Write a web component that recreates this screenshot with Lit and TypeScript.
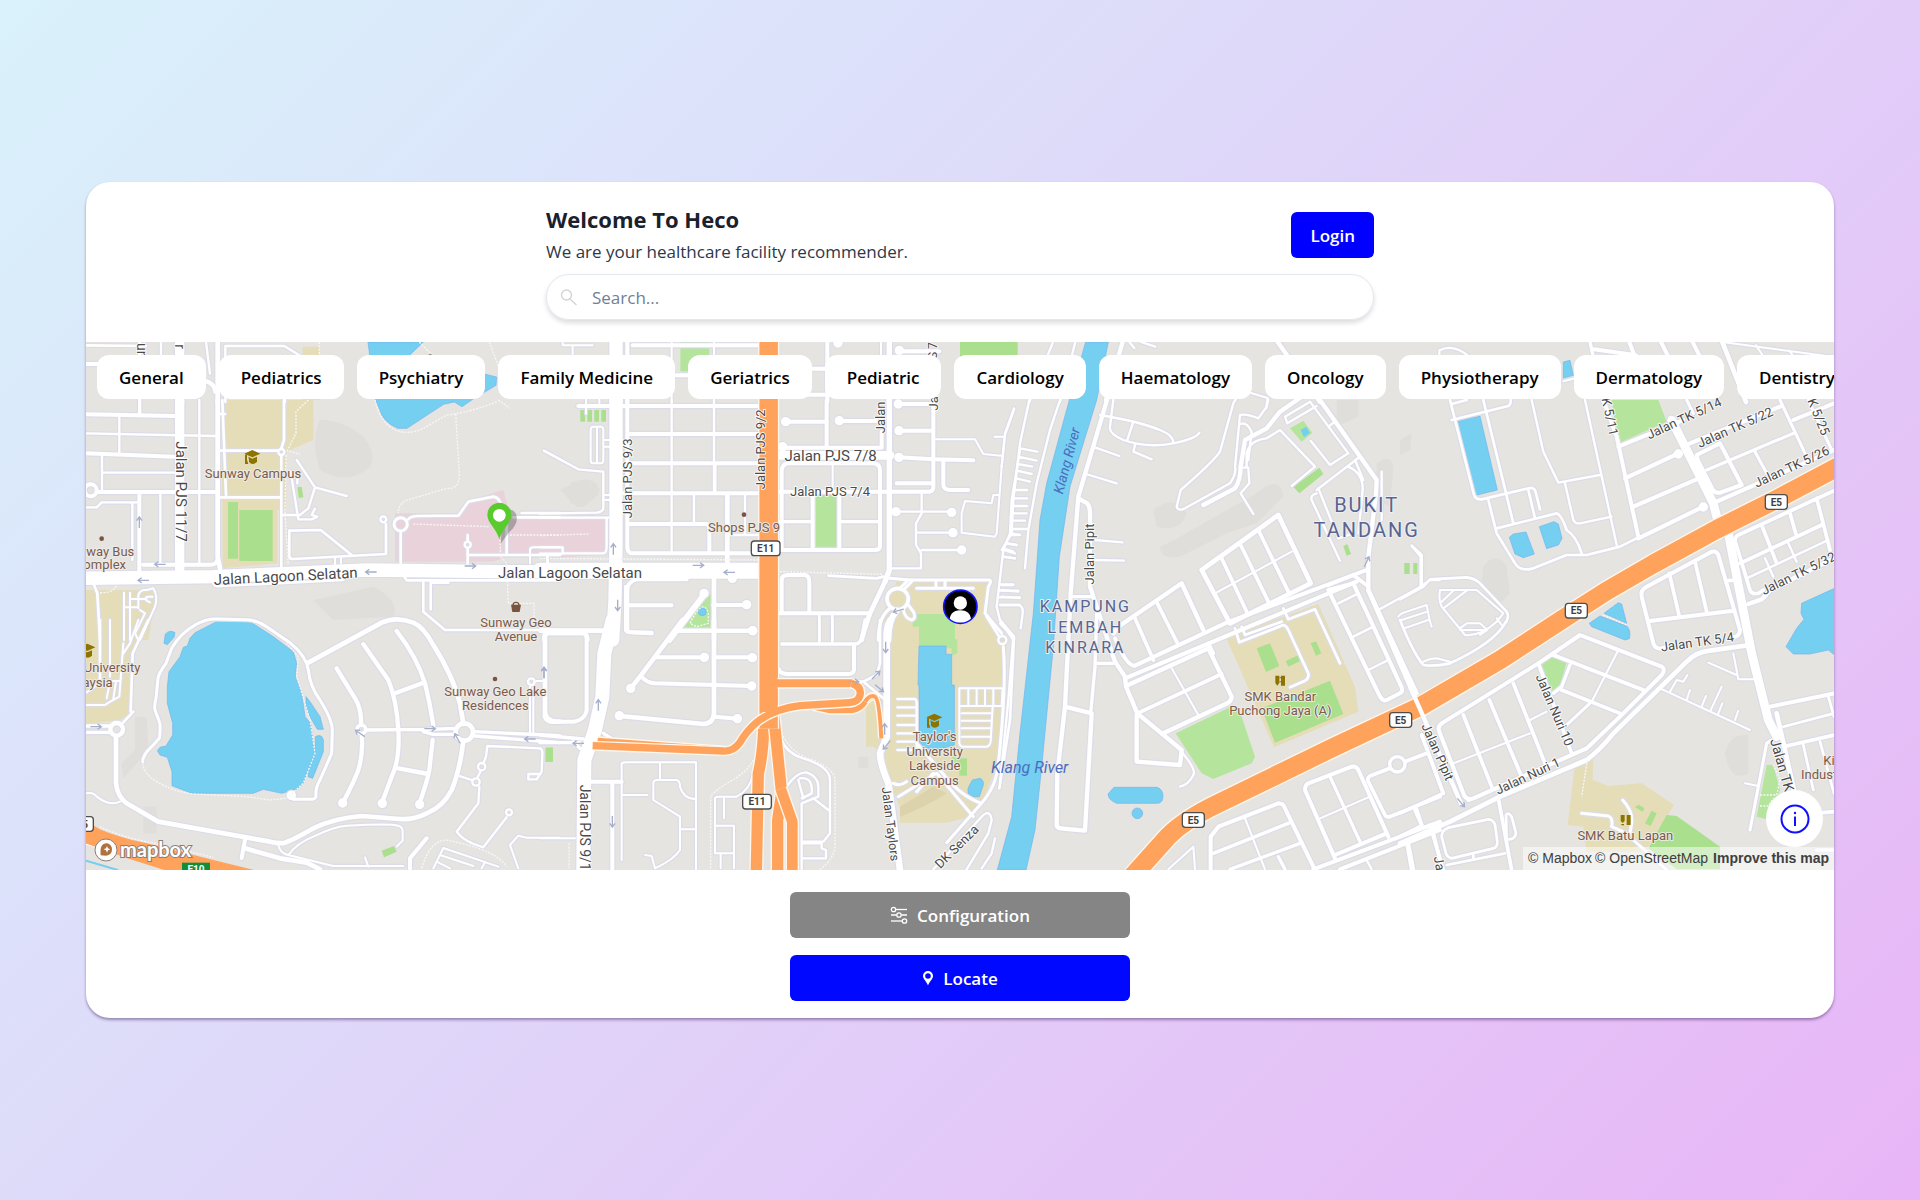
import { LitElement, html, svg, css } from "lit";
import { customElement, property } from "lit/decorators.js";

type Origin = [number, number];
type Road = [number, string];
type Dot = [number, number];
type Label = [string, number, number, number, string, number?];

interface Sector {
  at: Origin;
  water?: string[];
  sand?: string[];
  park?: string[];
  pitch?: string[];
  campus?: string;
  shade?: string[];
  roads: Road[];
  dots?: Dot[];
  rings?: [number, number, number, number][];
  paths?: string[];
  arrows?: [number, number, number][];
  labels?: Label[];
  caps?: Dot[];
  pois?: Dot[];
}

/* Map geometry: three drawing units to one CSS pixel. */
const SECTORS: Sector[] = [
  {
    at: [0, 0],
    water: [
      "M846 0H1012L960 50L1190 95L1232 105L1230 130L1160 172L1128 194L1105 180L1073 187L963 259H935Q890 240 880 200L868 172Z",
      "M4432 60L4452 55L4462 100L4432 108Z",
    ],
    park: ["M1783 0h87v88h-87z"],
    pitch: ["M2622 0h173v60h-173z"],
    sand: ["M650 14H700V174H650Z"],
    roads: [
      [28, "M281 0V180"], [14, "M395 0V180"], [10, "M161 0V215"], [8, "M0 10L180 12"], [12, "M0 66H60"],
      [7, "M225 0V60M360 0L372 95M418 180V12H595L640 40M597 40V180"], [12, "M345 115Q385 118 388 150"],
      [40, "M1590 0V180"], [12, "M1624 0V180M1640 10H2020M1770 100H2000"], [6, "M1757 0V180M1884 0V180M1430 0V10H1520M1460 10V60M1500 170V215M1540 170V190"],
      [12, "M2224 0V180M2110 80H2230M2110 158H2230"], [16, "M2410 0V180"], [6, "M2385 0V60"],
      [12, "M2440 28H2560"], [10, "M2542 60V180"], [7, "M2901 0L2830 180M2968 0L2922 180M3130 0L3145 18M3165 0L3208 14"],
      [13, "M3110 0L3060 174"], [13, "M3575 0L3702 180"], [7, "M4060 40V25Q4100 5 4145 40M3485 150L3545 168L3540 200"],
      [10, "M4512 0L4552 180"], [12, "M4525 22L4650 40M4630 0L4645 40M4725 0L4745 40M4820 0L4840 40"],
      [14, "M4909 0L4980 180"], [6, "M4909 0L5244 45M5010 10L5030 40M5110 26L5120 40M4432 118L4470 108"],
    ],
    dots: [[2440, 25], [2256, 3]],
    paths: ["M700 0V40", "M1210 0L1240 80", "M1000 0L1060 60"],
    labels: [
      ["un", 167, 26, 90, "street", 42], ["r", 281, 14, 90, "street", 42],
      ["S 7", 2540, 26, -90, "street", 36],
    ],
    pois: [[1033, 44]],
  },
  {
    at: [-18, 174],
    sand: ["M425 0H700V120L618 155V330H592V490L428 505Z", "M18 570H220L225 600L205 720H18Z"],
    pitch: ["M444 306h30v170h-30z", "M478 330h100v153h-100z", "M652 262L665 260L670 292L656 294Z"],
    campus: "M945 340H1140L1170 300L1270 270L1290 345H1580V460L1440 475L1280 470L1240 485H945Z",
    shade: ["M715 140h22v60h-22z", "M720 60Q790 60 850 110Q890 160 870 200Q800 260 720 210Q690 120 720 60Z", "M700 600L880 560Q960 600 940 650L760 660Z", "M1470 250Q1540 220 1560 270Q1540 320 1470 310Z"],
    roads: [
      [28, "M299 0V515"], [40, "M0 535L400 530L860 510L1260 515H1440"],
      [14, "M413 0V470L420 505"], [8, "M427 0L438 285M420 42H435M612 0V120L604 145M604 168V500M420 152H592M420 292H600"],
      [12, "M18 43L285 48M18 160L280 170M50 276H410M178 285V520M190 494H390Q410 494 412 480"],
      [7, "M18 100L405 108M66 165V270M66 218H285M118 45V160M358 0V490M18 322H50L65 307H170M241 280V490M157 310V480"],
      [7, "M650 180L705 262L685 325L660 345H605M705 262L800 288M632 215L655 358H695L712 350L695 345L705 326M652 225V250"],
      [8, "M628 392L722 390L815 465M628 392V470Q630 478 640 477L918 462V372"],
      [8, "M985 358Q990 350 1010 348L1135 347L1165 305L1240 290Q1262 292 1265 330M962 398V490M1163 405V420M1163 446V490M1165 465H1440M1280 350V465M1300 352H1440M1325 339H1440"],
      [6, "M1350 490V450Q1350 442 1360 442H1440M1403 465V490M765 475V495M783 475V490"],
      [7, "M1392 152L1440 178"], [8, "M400 550Q405 560 420 558L790 540M970 525L980 541H1440M1030 545V635L1095 690H1440M1052 550V628M1052 548H1105"],
      [8, "M40 550L52 580L60 720"], [6, "M175 625V585Q180 568 200 570L220 565Q235 590 225 620L180 720M132 578V720M150 578V720M155 597H200M135 622H170M180 630L195 640L165 700L175 720M218 590H200Q190 600 210 607"],
    ],
    rings: [[32, 271, 18, 12], [604, 156, 9, 7], [910, 358, 9, 7], [962, 373, 20, 9], [1163, 434, 9, 7]],
    paths: [
      "M885 0Q900 70 950 92Q990 105 1030 85L1100 45Q1180 35 1250 5", "M1127 42L1138 220Q1140 270 1100 265L990 298Q955 305 955 340",
      "M685 0L648 35V100L622 152L660 163", "M618 165L615 340L625 495", "M1000 372L1230 380", "M1290 405H1440", "M1260 420L1262 470L1280 490L1285 610H1362V680", "M60 578Q100 580 110 555", "M1255 0L1290 25",
    ],
    arrows: [[178, 367, -90], [240, 493, 180], [190, 541, 180], [873, 516, 180], [1171, 498, 0]],
    labels: [
      ["Jalan PJS 11/7", 302, 275, 90, "street", 45], ["Sunway Campus", 519, 220, 0, "place"],
      ["Jalan Lagoon Selatan", 617, 529, -3, "street", 45], ["Jalan Lagoon Selatan", 1470, 519, 0, "street", 45],
      ["Sunway Bus", 163, 453, 0, "place end"], ["Complex", 138, 494, 0, "place end"],
      ["Sunway Geo", 1308, 667, 0, "place"], ["Avenue", 1308, 708, 0, "place"],
    ],
    caps: [[517, 172]],
    pois: [[65, 416]],
  },
  {
    at: [-18, 834],
    sand: ["M18 -30H210L205 0L155 95L152 275L120 300L18 312Z"],
    water: [
      "M330 55L345 38L410 5Q460 0 510 5L580 50L640 95L650 130L646 170L665 220L675 290L692 310L700 370L705 400L688 440L670 490L650 508L605 520L550 508L520 520H335L276 497V455L262 412L240 405L232 392L240 382L258 378L278 345V310L262 250V200L267 155L300 110L310 82L322 78Z",
      "M252 70L256 42Q270 28 285 38L282 52L262 74Z", "M678 230L690 245L720 290L730 328H712L690 290L678 260Z", "M706 350Q725 340 730 360V395L698 475L684 470L688 440L706 400Z",
    ],
    pitch: ["M905 692L942 678L950 695L912 712Z", "M1397 383h22v42h-22z"],
    shade: ["M165 290L200 290L205 390L130 475L125 430L165 390Z", "M190 560h40v80h-40z"],
    roads: [
      [9, "M188 425Q188 405 215 380L238 355Q243 320 238 305L225 270Q222 260 228 235L234 175Q236 160 258 130L275 85Q300 40 350 12Q380 -4 410 -3L500 -1Q530 0 560 20L630 68Q680 110 685 150Q690 200 720 240Q757 300 757 330L755 400L720 480Q705 505 708 530Q705 538 690 538H640"],
      [14, "M685 128L905 8Q950 -12 1000 8Q1030 20 1060 75Q1120 170 1140 250L1150 312M1150 362Q1140 450 1115 510Q1090 560 1040 580Q1000 600 960 597L845 588Q760 595 700 625Q640 660 615 668Q600 672 570 665L235 605L140 550Q112 530 108 490V350"],
      [13, "M770 145L825 235Q845 265 843 315M845 345Q850 400 835 450Q820 490 790 545M850 73L925 180Q950 240 955 330Q960 420 935 470L907 545M950 33Q1010 110 1035 190Q1050 250 1060 315M1058 360L1048 450Q1040 490 1020 545M945 220L1030 188M955 445L1045 462"],
      [10, "M860 330L1040 328L1130 325M1030 335L1060 343H1125M1185 335L1440 347M1185 348L1440 368M18 318H92M18 337H92"],
      [12, "M495 660L485 714"], [14, "M495 685L600 715L680 728L720 748"],
      [6, "M595 675Q600 700 625 705L760 738H970M625 705Q650 670 700 650Q760 620 800 617Q930 610 955 617Q970 620 968 640V662L950 680M855 712L865 740"],
      [12, "M1040 655L990 715V745"], [7, "M1135 467L1175 480M1198 500L1195 550L1130 635Q1150 665 1210 682L1280 592M1212 425L1218 410L1222 378L1380 385Q1388 388 1387 400L1385 455L1370 478H1345V462H1382M1202 453L1192 474"],
      [6, "M1440 653H1340L1315 647L1290 675L1315 745M1060 745L1090 684L1255 740M1080 705L1180 738M1070 725L1110 745M1215 727L1205 745M18 520Q40 515 50 530Q90 560 120 545"],
      [14, "M1440 38H1395V290Q1400 305 1420 305H1440"], [6, "M1350 200V345M1360 200V345M1370 183H1392"],
      [8, "M160 275L125 312M152 275L158 100L205 0M60 0V185"], [6, "M18 218Q45 205 55 185M90 0V170M130 70L118 230Q90 245 75 255H18M85 183H120M175 0L150 70L130 100M80 235L90 185M100 235L108 185"],
    ],
    dots: [[634, 526], [788, 549], [907, 550], [1019, 553]],
    rings: [[1153, 336, 26, 14], [844, 328, 13, 11], [110, 328, 19, 13], [1188, 486, 11, 7], [1205, 440, 11, 7], [1287, 577, 9, 7], [1354, 185, 10, 7]],
    paths: ["M188 430Q190 460 230 485Q280 515 340 522L500 530L570 540L620 535L670 490L705 400L690 300L672 240L650 170L655 110L620 70", "M1025 745Q1050 660 1100 660Q1250 690 1280 740", "M60 620Q120 650 200 665L400 712"],
    arrows: [[48, 320, 0], [1050, 326, 0], [840, 340, 215], [1132, 355, 240], [1350, 357, 180], [1392, 158, -90]],
    labels: [
      ["University", 181, 143, 0, "place end"], ["Malaysia", 98, 186, 0, "place end"],
      ["Sunway Geo Lake", 1246, 214, 0, "place"], ["Residences", 1246, 256, 0, "place"],
    ],
    caps: [[22, 93]],
    pois: [[1245, 177]],
  },
  {
    at: [1362, 174],
    pitch: ["M121 30h14v35h-14zM142 30h14v35h-14zM163 30h14v35h-14zM184 30h14v35h-14z"],
    park: ["M828 285h64v158h-64z", "M515 580V685H420L440 665L490 605Z"],
    water: ["M475 635a12 12 0 1 0 24 0a12 12 0 1 0 -24 0"],
    shade: ["M60 270Q130 230 155 270Q150 330 110 320Z"],
    roads: [
      [40, "M228 0V440L225 600L218 720"], [48, "M0 512H655"], [12, "M262 0V440Q262 460 280 460H655M115 18H655M270 102H655M265 190H655M250 280H655M265 372H500Q508 374 508 385V460"],
      [7, "M395 0V460M522 0V280M462 285V370M615 285V400M570 405H655M526 190V280"], [14, "M562 285V500"],
      [6, "M160 80H185Q190 82 190 90V180Q190 190 182 190H160Q152 190 152 182V90Q152 80 160 80M171 80V190M195 120H210M195 140H210M195 285H210M195 300H210"],
      [7, "M12 152L115 208L190 215V325Q188 336 170 338L0 341M0 353H205M0 442H68V460H190Q200 458 200 440V355M22 465V490M0 461H68"],
      [12, "M262 690V570Q262 545 290 538H440M258 616H395M258 560V690Q260 697 275 697L335 700"],
      [14, "M522 530V720"], [18, "M488 590L388 720"], [12, "M520 615H620M420 692H638"],
      [10, "M0 690H195"], [12, "M12 720V712Q14 700 24 700H130Q143 702 143 720"],
      [16, "M1048 0V510L1035 545"], [14, "M1035 545L990 640Q970 700 965 720"], [12, "M720 640H985"], [8, "M838 645V720M877 645V720M1030 530L1010 535L865 527"],
      [12, "M725 640V540Q725 525 745 525H795Q808 528 808 545V635M725 450V210Q728 192 745 190H1000Q1020 192 1020 210V440Q1018 452 1000 450H720M720 275H1170Q1180 272 1180 260V0M818 285V445M898 285V445M720 143H1025V95M860 0V140"],
      [10, "M720 365H815M900 365H1020"], [26, "M720 166H1050"], [6, "M878 195V275"],
      [12, "M737 65H860M898 63H1010M1075 12H1175M1077 92H1175M1077 172L1180 178L1300 181M1070 250H1180M1210 185V255Q1212 270 1230 270H1285"],
      [6, "M1185 118H1305L1330 162L1390 168M1423 28L1395 105L1385 200L1370 400L1365 410L1265 398L1265 340L1275 303L1355 310L1360 285H1375M1363 110H1395"],
      [7, "M1145 280V340L1128 370V435L1143 460V505H1050M1068 335H1235M1128 398H1240M1145 450H1265"],
      [7, "M1440 150L1415 300L1410 400L1390 450L1370 620L1380 660L1420 720M1415 400L1440 405M1400 430L1430 435M1390 450L1425 460M1388 470L1425 475M1385 555H1420M1385 570L1435 575M1385 590L1440 594M1380 615H1440"],
      [9, "M1050 535L1110 540H1350Q1355 545 1345 560L1335 640L1385 700M1130 565H1300M1188 540V562M1215 540V562M1115 545L1095 565M1100 545L1080 565"],
      [10, "M1050 625Q1015 650 1015 720"], [18, "M1070 632Q1045 660 1045 720"], [9, "M1105 615L1120 635Q1130 655 1115 660Q1095 655 1090 630"],
    ],
    rings: [[1073, 597, 32, 11]],
    dots: [[620, 614], [492, 580], [577, 535], [638, 692], [737, 65], [898, 62], [728, 140], [1075, 12], [1077, 92], [1077, 172], [1068, 335], [1235, 337], [1239, 398], [1265, 450]],
    paths: ["M0 475L655 480", "M0 407L145 402", "M720 515L1030 523", "M450 670Q490 590 505 640V670L470 680Z"],
    arrows: [[220, 447, -90], [233, 616, 90], [475, 496, 0], [568, 517, 180], [1075, 632, 165]],
    labels: [
      ["Jalan PJS 9/3", 262, 235, -90, "street"], ["Jalan PJS 9/2", 660, 148, -90, "street"], ["Jalan PJS 7/8", 872, 167, 0, "street", 45],
      ["Jalan PJS 7/4", 870, 275, 0, "street"], ["Jalan", 1022, 52, -90, "street"], ["Ja.", 1180, 5, -90, "street"], ["Shops PJS 9", 612, 381, 0, "place"],
    ],
    pois: [[612, 344]],
  },
  {
    at: [1362, 834],
    sand: ["M1070 -115H1350L1330 -20L1400 70L1385 400L1325 550L1285 592L1220 608H1080V560L1020 420L1040 360V60L1030 -20Z", "M978 220H1030V400L1000 380H978Z"],
    park: ["M1118 -18H1245V58H1252V100L1235 108V85H1137V20H1118Z", "M1235 400L1260 420V440L1238 430Z"],
    pitch: ["M1258 415h23v52h-23z", "M17 383h22v42h-22z"],
    water: ["M1137 78H1218V103H1235V195H1243V375L1190 390L1137 380V195H1134Z", "M1297 480L1320 475Q1332 480 1330 495L1318 530H1300L1284 520V505Z"],
    shade: ["M955 410h30v35h-30z"],
    roads: [
      [42, "M218 0L193 100L187 230L165 330L133 420L130 750"], [12, "M15 50Q15 40 28 40H130Q140 42 140 60V270Q135 300 100 305H50Q15 300 15 270Z"], [8, "M0 35H200"],
      [10, "M0 345L130 357M0 368H120M120 385L100 365M190 340L225 362"],
      [14, "M428 0L300 170L272 205M522 0V280Q520 310 490 312L240 288"], [12, "M412 32H638M345 112H492M530 112H637M305 170Q320 188 345 190L635 198M525 290L592 296"],
      [12, "M258 0V30Q260 36 275 37L335 38"],
      [8, "M838 0V70M877 0V70"], [10, "M725 72H945Q960 72 965 55L975 0"], [12, "M942 75V150Q940 162 925 162H740Q718 160 715 145"],
      [20, "M1052 0Q1038 20 1040 60V350L1020 400Q1020 430 1045 490L1060 600L1080 750"], [8, "M1020 0V130L1010 165L970 185L1030 235M925 185H970"],
      [6, "M1258 205H1388M1258 205V370Q1260 380 1270 380H1340Q1350 378 1352 365L1358 260M1258 258H1385M1285 205V258M1310 205V258M1335 205V258M1360 205V258M1265 280H1355M1265 302H1355M1265 325H1350M1265 350H1350M1388 205L1385 258"],
      [7, "M1072 237H1125Q1130 240 1130 250V395M1072 262H1130M1072 287H1130M1072 315H1130M1072 340H1130M1072 365H1130M1072 390H1130"],
      [9, "M1390 80Q1400 200 1375 430Q1370 500 1320 555L1220 668M1130 370L1200 450Q1260 530 1325 550M1190 460L1300 590M1185 462L1075 530M1180 460L1130 515M1060 490Q1080 500 1100 485"],
      [8, "M1340 -10L1378 50M1380 0L1422 50L1410 300L1378 505"], [7, "M1365 655L1355 700L1325 745M1180 748L1325 590Q1350 565 1355 600L1345 640L1280 748"],
      [12, "M217 490V750M150 485H245"], [6, "M245 720V430Q250 427 260 427H468V748M360 430V480M340 540V488Q342 480 350 480H410Q420 482 420 500Q430 535 465 537M340 540L420 590V690Q400 720 345 745M315 705L335 708L345 745M250 525H322M420 628H468M0 655H105"],
      [6, "M525 700V535Q525 530 535 530H590Q630 510 640 460M525 617H582V745M552 535V595M525 700H582M542 700V745"],
      [7, "M725 360Q740 400 790 415Q870 440 870 480V640L850 665H788M740 500Q770 455 800 457Q835 470 835 500V530L785 550V748M775 480L790 535M780 475Q820 470 815 520L785 535M820 535L865 570M788 670H845V685L858 690V715H788"],
    ],
    dots: [[272, 205], [493, 112], [637, 113], [635, 198], [592, 296], [238, 287], [638, 32]],
    rings: [[1387, 60, 12, 7]],
    paths: ["M512 745V530Q515 520 560 490Q620 460 640 420", "M725 340Q750 400 820 420Q885 450 885 480V680Q880 720 840 748", "M87 670V745"],
    arrows: [[12, 158, -90], [175, 255, -90], [115, 370, 180], [217, 605, 90], [940, 185, 0], [1008, 165, -45], [1018, 205, 40], [1037, 82, 90], [1034, 327, -90], [1040, 375, 130]],
    labels: [
      ["Jalan PJS 9/1", 135, 623, 90, "street", 42], ["Jalan Taylors", 1052, 612, 83, "street", 38], ["DK Senza", 1250, 680, -45, "street"],
      ["Taylor's", 1184, 350, 0, "place"], ["University", 1184, 394, 0, "place"], ["Lakeside", 1184, 437, 0, "place"], ["Campus", 1184, 480, 0, "place"],
    ],
    caps: [[1183, 303]],
  },
  {
    at: [2742, 174],
    water: [
      "M257 -174H325L290 0L210 260L178 470L160 740L125 1100L105 1290L78 1410H-8L35 1250L60 1000L100 640L120 360L140 250L208 0Z",
      "M342 1162H472Q490 1170 489 1190Q488 1210 470 1210H350Q325 1200 324 1182Z", "M396 1240a16 16 0 1 0 32 0a16 16 0 1 0 -32 0",
    ],
    sand: ["M678 712L955 612L1065 860L1075 935L822 1042Z"],
    park: ["M527 1000L690 922Q705 925 720 935L765 1070L755 1090L640 1137L605 1120Z", "M870 85L910 62L937 98L905 125Z"],
    pitch: [
      "M770 745L810 730L838 798L798 816Z", "M857 783L895 766L900 783L865 800Z", "M932 730L948 724L964 760L948 767Z", "M990 842L1030 942L825 1028L785 925Z",
      "M880 260L958 203L970 222L898 280Z", "M1030 438L1042 433L1053 462L1040 467Z", "M1213 489h16v33h-16zM1240 489h12v33h-12z",
    ],
    shade: ["M480 440L540 410L770 280Q840 220 850 290L770 370L680 400L540 470Q480 480 480 440Z", "M1130 190Q1170 160 1180 200L1170 320L1130 300Z", "M460 330Q520 280 560 340Q540 400 470 380Z", "M1010 0h65v50l-65 30z"],
    roads: [
      [13, "M330 -30L235 290L212 580L195 920L172 1120L170 1275Q172 1284 182 1285L255 1292L275 940L195 920"],
      [13, "M235 295L262 310Q270 320 270 340V560L345 785L375 830"], [10, "M212 590H275M290 640L285 800L272 940M285 790H340"],
      [7, "M88 0L60 130L40 300L35 400L5 450M60 145L112 155M55 170L110 182M52 192L97 200M50 212L95 222M48 235L90 245M45 270H82M42 295H82M40 318H82M38 340H80M36 362H75M35 387H85M35 405H55M20 430L50 435M10 445L40 455M8 470L45 475M180 0L150 90L110 250L85 390L75 505M42 25L15 100L5 200"],
      [7, "M0 553H40M0 572H55M0 592H60M0 615H55Q70 618 68 640L62 685M0 670L40 710L25 900L0 1150"],
      [7, "M300 45Q420 65 480 90Q520 105 520 130M340 0L330 80Q325 100 370 120Q440 145 520 130Q590 115 598 98M400 65L382 120M405 135L400 155L455 178M278 140L358 168M258 222L350 250M285 420L368 427M285 480L372 482"],
      [7, "M740 -60L700 10L660 155Q640 185 542 270L530 320Q535 335 555 325L690 250Q710 220 705 200L720 45Q740 40 775 55L800 20L805 0M722 72Q740 65 755 95L745 180M730 203H745L748 250L722 280L760 342M740 200V160Q750 120 800 115L840 90L945 200L875 258"],
      [13, "M610 315L705 265Q722 240 722 200L735 120L800 85L840 35L920 -20"], [13, "M960 0L1130 240L1128 280L1105 470V570L1250 880"],
      [7, "M855 50L930 5L1045 160L990 195L932 122M855 50L862 70L950 18M1045 200Q1090 220 1088 270L1075 400M950 270L1080 170M955 265L1015 415L1060 400M950 280Q930 285 935 300L1020 482M1065 180L1090 240M1145 215V360M985 80L1005 65M1235 437L1262 470V560L1140 627M1262 560L1290 540H1320"],
      [14, "M605 510L835 345L932 550L690 670Z"], [11, "M665 475L740 635M722 435L805 605M775 390L865 575M985 555L1060 525L1105 560"], [6, "M645 580L875 455"],
      [12, "M345 715Q380 800 405 797L680 668L1060 525L1100 510M375 835L1070 545"],
      [13, "M340 700L355 680L545 550L610 690"], [11, "M405 655L460 780M472 610L535 735"],
      [13, "M375 830L378 860L412 940L545 1050L540 1095L410 1085V945M378 858L625 745L695 890Q695 900 685 908L490 1000"], [11, "M412 940L665 822M625 730L640 760"], [6, "M515 805L595 945"], [7, "M545 1055Q590 1110 580 1125Q565 1155 540 1160"],
      [8, "M705 685L718 727L850 675Q860 678 865 690L925 820Q928 835 915 842L870 862M725 680L735 705L845 665M850 625L865 658L945 628L1020 790"],
      [12, "M985 570L1140 890Q1150 905 1160 900L1200 880Q1210 875 1205 862L1060 550Z"], [7, "M1015 610L1075 580M1060 710L1120 680M1105 810L1165 780"],
      [12, "M632 1408V1310L655 1280L835 1210Q850 1210 855 1225L940 1400"], [10, "M640 1360L870 1268M690 1408L900 1330M835 1370L855 1408"], [6, "M735 1255L795 1408M505 1408L580 1340L585 1408"],
      [12, "M1005 1375L915 1170Q915 1155 925 1150L1055 1100Q1070 1098 1075 1110L1165 1310M1005 1365L1160 1300M940 1408L1320 1265M1020 1408L1320 1290"], [10, "M990 1130L1080 1325"], [6, "M960 1255L1110 1190"],
      [11, "M1170 1105L1110 1128Q1100 1135 1105 1145L1155 1245Q1160 1255 1175 1248L1320 1190M1220 1083L1280 1060M1250 1228L1265 1275M1225 1330L1240 1408M1295 1280L1320 1380M1265 1005L1330 1180"], [7, "M1100 1380L1115 1408"],
    ],
    rings: [[1192, 1093, 23, 10]],
    arrows: [[1100, 485, -65]],
    labels: [
      ["Klang River", 200, 182, -75, "river", 42], ["Klang River", 89, 1102, 0, "river", 48], ["Jalan Pipit", 267, 462, -90, "street", 39],
      ["BUKIT", 1100, 316, 0, "district", 60], ["TANDANG", 1100, 389, 0, "district", 60],
      ["KAMPUNG", 256, 620, 0, "district", 48], ["LEMBAH", 256, 681, 0, "district", 48], ["KINRARA", 256, 741, 0, "district", 48],
      ["SMK Bandar", 841, 888, 0, "place"], ["Puchong Jaya (A)", 841, 930, 0, "place"],
    ],
  },
  {
    at: [3942, 174],
    water: [
      "M173 63L240 48L292 270L228 286Z", "M328 412L340 402L378 396L403 462L370 473L345 462Z", "M418 380L462 365L475 372L486 415L475 435L440 446Z",
      "M612 640L655 608L665 612L680 670Z", "M568 670L600 648L680 678Q694 690 688 716L675 720L575 680Z", "M1310 562L1205 610L1203 640L1212 658L1190 685L1158 740L1180 762L1230 762L1285 750L1310 770Z",
    ],
    sand: ["M525 1090L580 1070L578 1140L625 1158L725 1150L822 1215L735 1355H560L550 1280L503 1275Z"],
    park: ["M635 0H775L800 65L655 130Z", "M418 790L455 768L500 785L480 860L460 878Z", "M1100 1095H1120L1140 1170L1110 1260L1070 1250Z"],
    pitch: ["M800 1245L830 1248L960 1340V1408H830L745 1345Z", "M705 1222L715 1214L733 1224L728 1235Z", "M735 1270L755 1232L770 1240L752 1278Z"],
    shade: ["M250 500Q290 450 320 500L330 580L290 620L245 540Z", "M975 1060Q990 1000 1045 1005V1120Q990 1150 975 1060Z", "M0 120L35 100L30 150L0 165Z"],
    roads: [
      [13, "M-95 570L0 790L70 950L170 1180L185 1215"], [10, "M65 1005L130 1180L0 1240"],
      [14, "M0 1330L150 1265L300 1190L560 1080Q600 1050 640 1000L860 785Q890 755 930 752L1050 735"],
      [12, "M205 1200L220 1195L560 1045L670 940L785 825Q798 808 785 800L540 705L415 790L125 970Q112 980 118 995L190 1180Q195 1200 215 1197"],
      [11, "M190 945L275 1160M268 900L365 1130M340 850L435 1090M460 765L730 870M415 790L515 1060M485 870L660 940"], [10, "M510 795L485 860L460 880"],
      [6, "M160 1090L390 1000M390 960L440 935M655 750L575 905"], [9, "M575 905L500 975"],
      [6, "M780 865L1050 990M810 875L830 840L850 845L862 825M860 900L870 870M905 920L918 888M930 935L965 860M955 940L967 910M1005 960L1015 932"],
      [26, "M815 60L940 310L950 350"], [26, "M985 400L1020 580L1055 760L1105 960L1130 1010"], [14, "M1130 940L1200 1250"],
      [12, "M610 0L650 110L715 410M655 140L850 60M675 235L835 160M700 320L890 238M715 415L910 320"], [7, "M555 0L650 435M395 0L430 155L475 248L600 225M495 250L520 360Q525 372 540 370L635 350"],
      [8, "M150 0L222 285Q228 300 245 298L390 264Q405 262 408 280L420 328M250 0L340 370M265 300L290 400L345 490Q360 515 400 505L500 465H560L660 440L720 410M290 385L470 340Q485 345 500 390Q530 410 545 460M155 60L325 18Q333 15 332 0M155 12L200 0M385 270L405 355"],
      [12, "M890 165L960 130L1025 255L960 278Q942 280 938 268L893 180ZM870 130L1140 20M950 305L1302 150M1180 60L1302 10"], [9, "M920 210L1180 100M1065 155L1100 220M860 0L880 40M1140 0L1215 160M1225 0L1295 150"],
      [11, "M1302 272L1015 405Q1003 412 1006 425L1050 570Q1055 585 1075 580L1090 570M1020 490L1265 375M1085 375L1130 490M1170 340L1190 410M1250 295L1290 450"], [7, "M1040 535L1285 420M1165 430L1190 485M1095 475L1120 530"], [13, "M1045 612L1085 598Q1100 585 1110 570L1302 475"],
      [12, "M800 742L780 746Q765 745 760 730L725 590Q720 570 740 560L935 455Q950 452 955 465L1020 690Q1020 708 1000 712M750 663L1000 632"], [11, "M808 520L838 650M885 485L920 635M985 542L1010 540"],
      [12, "M1110 920L1302 880"], [8, "M1150 980L1302 940M1210 1035L1240 1170M1260 1025L1302 1180M1285 890L1302 950"], [11, "M1150 1040L1302 1005M1190 1245L1302 1235M1250 1350H1302"], [6, "M1000 760L1015 838H1070M925 788L1010 825M1035 1150L1075 1158"], [9, "M1050 1290L1100 1030L1115 1020"],
      [11, "M295 1195L335 1410M90 1275L130 1410M0 1310L60 1280M45 1230L65 1275M20 1325L35 1410"], [8, "M145 1283L265 1258Q280 1258 285 1275L292 1325Q292 1342 280 1345L155 1375Q142 1372 138 1360L125 1310Q125 1290 145 1283M315 1360L140 1395M220 1362V1375M318 1245Q325 1235 335 1250L348 1300Q345 1320 320 1318Z"],
      [9, "M545 1240L625 1248Q640 1255 635 1280L680 1300M668 1200Q700 1235 695 1270L690 1300M700 1320L800 1410"],
      [8, "M0 598L70 560L90 538L200 532Q225 535 240 550L320 635Q330 650 315 670Q280 730 150 790Q100 800 70 795Q40 760 0 660M65 560V465L35 437"],
      [6, "M-5 650Q0 640 20 635L80 615L90 665L95 680M5 660L82 635M12 685L85 660M120 570H230L310 640L290 665Q240 710 195 705L125 620Q115 600 120 570M125 605L160 572M130 625L200 572M180 685L200 670H240L262 690L240 705M180 690H260M290 655L305 675M70 785Q90 775 110 775L150 785"],
    ],
    dots: [[835, 162], [910, 321]],
    paths: ["M562 1080L545 1190", "M1080 1185H1130L1140 1140L1120 1095", "M610 645L680 675", "M1080 1218H1105L1120 1195"],
    arrows: [[183, 1208, 50]],
    labels: [
      ["Jalan TK 5/14", 852, 55, -25, "street"], ["Jalan TK 5/22", 1005, 82, -24, "street"], ["Jalan TK 5/26", 1175, 200, -25, "street"], ["Jalan TK 5/32", 1195, 520, -26, "street"],
      ["K 5/11", 630, 50, 78, "street"], ["K 5/25", 1256, 50, 68, "street"], ["Jalan TK 5/4", 892, 726, -8, "street"], ["Jalan Pipit", 113, 1055, 66, "street"],
      ["Jalan Nuri 10", 464, 930, 67, "street"], ["Jalan Nuri 1", 383, 1128, -25, "street"], ["Jalan TK", 1147, 1095, 74, "street", 42], ["Ja", 118, 1390, 80, "street"],
      ["SMK Batu Lapan", 676, 1305, 0, "place"], ["Kin", 1270, 1080, 0, "place start"], ["Indust", 1203, 1122, 0, "place start"],
    ],
  },
];

/* Orange motorways, in whole-map units. */
const MOTORWAYS: Road[] = [
  [34, "M2034 1134Q2032 1234 2017 1294L2011 1590"],
  [34, "M2062 1110L2087 1354L2075 1434V1590"],
  [32, "M2084 1340L2119 1439V1590"],
  [55, "M2048 -10V1160"],
  [24, "M2070 1024H2300"],
  [14, "M1535 1194L1920 1222"],
  [18, "M2182 1094L2232 1105H2297Q2322 1102 2337 1079Q2352 1059 2367 1064"],
  [12, "M2337 1079Q2352 1056 2367 1064Q2380 1072 2386 1189"],
  [22, "M2296 1024Q2328 1034 2322 1060Q2317 1080 2290 1082L2142 1091Q2062 1101 2012 1141Q1982 1166 1962 1201Q1942 1229 1912 1227L1520 1211"],
  [56, "M3140 1602L3232 1499Q3282 1439 3402 1382L3742 1216L4002 1094L4242 954L4442 824L4562 747L4702 666L4892 562L5072 472L5260 372"],
];

const SHIELDS: [number, number, string][] = [
  [2039, 619, "E11"], [2013, 1379, "E11"], [3322, 1434, "E5"], [3944, 1134, "E5"], [4471, 806, "E5"], [5071, 480, "E5"], [-11, 1446, "E5"],
];

const SPECIALTIES = [
  "General", "Pediatrics", "Psychiatry", "Family Medicine", "Geriatrics", "Pediatric", "Cardiology",
  "Haematology", "Oncology", "Physiotherapy", "Dermatology", "Dentistry",
];

@customElement("street-map")
export class StreetMap extends LitElement {
  static styles = css`
    :host { display: block; height: 100%; }
    .map { display: block; width: 100%; height: 100%; background: #e5e4e0; font-family: Roboto, "Noto Sans", sans-serif; }
    .shade { fill: #dfdeda; }
    .hill { fill: #d8cfa6; opacity: 0.7; }
    .sand { fill: #e5ddb8; }
    .care { fill: #e9d2da; }
    .park { fill: #b5e59c; }
    .pitch { fill: #a9df8d; }
    .water { fill: #75cff0; stroke: #6fb4f2; stroke-width: 2; }
    .line { fill: none; stroke-linecap: round; stroke-linejoin: round; }
    .casing { stroke: #dcdce8; }
    .road { stroke: #fff; }
    .dot { fill: #fff; }
    .trail { fill: none; stroke: #f7f7f8; stroke-width: 4; stroke-dasharray: 6 4; }
    .motorway { stroke: #ffa35c; stroke-linecap: butt; }
    .edge { stroke: #fff6ec; stroke-linecap: butt; }
    .arrow { fill: none; stroke: #a5aecb; stroke-width: 4; }
    .street, .place, .river, .district { text-anchor: middle; dominant-baseline: central; paint-order: stroke; stroke-linejoin: round; }
    .street { fill: #4a4a4a; stroke: rgba(255, 255, 255, 0.85); stroke-width: 6; }
    .place { fill: #7b5b50; stroke: rgba(240, 238, 230, 0.9); stroke-width: 6; }
    .river { fill: #4b6cc0; font-style: italic; }
    .district { fill: #5a648f; stroke: #eef0f4; stroke-width: 6; letter-spacing: 6px; }
    .start { text-anchor: start; }
    .end { text-anchor: end; }
    .plate { fill: #fff; stroke: #4d4d4d; stroke-width: 4; }
    .code { fill: #3d3d3d; font-weight: 700; font-size: 30px; text-anchor: middle; dominant-baseline: central; }
    .exit { fill: #0f8f3c; }
    .exit-code { fill: #fff; }
    .olive { fill: #8d7300; }
    .brown { fill: #7a5440; }
    .brand { fill: #fff; stroke: #8a7f78; stroke-width: 6; paint-order: stroke; font-family: Lato, sans-serif; font-weight: 700; font-size: 60px; dominant-baseline: central; }
  `;

  private layer(key: "shade" | "sand" | "park" | "pitch" | "water") {
    return SECTORS.map((s) => svg`<g transform="translate(${s.at[0]} ${s.at[1]})">${(s[key] ?? []).map((d) => svg`<path class=${key} d=${d} />`)}</g>`);
  }

  private roads(extra: number, cls: string) {
    return SECTORS.map(
      (s) => svg`<g transform="translate(${s.at[0]} ${s.at[1]})">
        ${s.roads.map(([w, d]) => svg`<path class="line ${cls}" stroke-width=${w + extra} d=${d} />`)}
        ${(s.rings ?? []).map(([x, y, r, w]) => svg`<circle class="line ${cls}" cx=${x} cy=${y} r=${r} stroke-width=${w + extra} />`)}
        ${(s.dots ?? []).map(([x, y]) => svg`<circle class="dot ${cls}" cx=${x} cy=${y} r="12" stroke-width=${4 + extra} />`)}
      </g>`,
    );
  }

  private annotations() {
    return SECTORS.map(
      (s) => svg`<g transform="translate(${s.at[0]} ${s.at[1]})">
        ${(s.arrows ?? []).map(([x, y, a]) => svg`<path class="arrow" transform="translate(${x} ${y}) rotate(${a})" d="M-17 0H15M5 -8L16 0L5 8" />`)}
        ${(s.caps ?? []).map(([x, y]) => svg`<path class="olive" transform="translate(${x} ${y})" d="M0 -22L24 -11L0 0L-24 -11ZM-12 -2L0 4L14 -2V14Q0 26 -10 14V8ZM-22 -8H-16V8L-12 20H-22Z" />`)}
        ${(s.pois ?? []).map(([x, y]) => svg`<circle class="brown" cx=${x} cy=${y} r="7" />`)}
        ${(s.labels ?? []).map(([t, x, y, a, c, size]) => svg`<text class=${c} font-size=${size ?? 39} transform="translate(${x} ${y}) rotate(${a})">${t}</text>`)}
      </g>`,
    );
  }

  render() {
    return html`<svg class="map" viewBox="0 0 5244 1584" preserveAspectRatio="xMidYMid slice" role="img" aria-label="Street map">
      ${this.layer("shade")}${this.layer("sand")}
      <path class="hill" d="M2442 1394L2542 1334L2582 1354Q2522 1394 2442 1424Z" />
      <path class="care" d=${SECTORS[1].campus ?? ""} transform="translate(-18 174)" />
      ${this.layer("park")}${this.layer("pitch")}${this.layer("water")}
      ${this.roads(7, "casing")}${this.roads(0, "road")}
      ${SECTORS.map((s) => svg`<g transform="translate(${s.at[0]} ${s.at[1]})">${(s.paths ?? []).map((d) => svg`<path class="trail" d=${d} />`)}</g>`)}
      <path class="line road" stroke-width="5" d="M0 1506L290 1590" />
      <path class="line" stroke="#75cff0" stroke-width="6" d="M0 1556L95 1584" />
      <path class="motorway" fill="#ffa35c" stroke="#fff6ec" stroke-width="4" d="M-6 1436L42 1464Q102 1489 182 1506L382 1556L520 1590H260L122 1546L-6 1500Z" />
      ${MOTORWAYS.map(([w, d]) => svg`<path class="line edge" stroke-width=${w + 8} d=${d} /><path class="line motorway" stroke-width=${w} d=${d} />`)}
      <path class="line motorway" stroke-width="53" d="M2048 -10V1110" />
      <path class="line road" stroke-width="13" d="M3972 1034L4012 1124" />
      <path fill="#75cff0" d="M3644 264L3660 254L3672 272L3654 286Z" />
      ${this.annotations()}
      ${SHIELDS.map(([x, y, t]) => {
        const w = t.length > 2 ? 86 : 66;
        return svg`<g transform="translate(${x} ${y})"><rect class="plate" x=${-w / 2} y="-22" width=${w} height="44" rx="9" /><text class="code">${t}</text></g>`;
      })}
      <rect class="exit" x="288" y="1562" width="84" height="40" />
      <text class="code exit-code" x="330" y="1582">E10</text>
      <g class="olive">
        <path d="M3568 1001h12v22l-6 8l-6 -8zM3585 1001h12v30h-12zM3585 1006h-4v3h4zM3585 1018h-4v3h4z" />
        <path d="M4604 1419h12v18l-6 6l-6 -6zM4622 1419h12v30h-12zM4606 1446h8v4h-8z" />
      </g>
      <path class="brown" d="M1275 788H1305L1301 810H1279Z" />
      <path fill="none" stroke="#7a5440" stroke-width="4" d="M1281 790Q1281 781 1290 781Q1299 781 1299 790" />
      <g>
        <path fill="#000" opacity="0.25" d="M1244 605L1270 570Q1300 545 1290 515Q1280 500 1262 502L1250 520Z" />
        <path fill="#5acb2e" d="M1240 592Q1236 575 1216 548Q1204 532 1204 518A36 36 0 0 1 1276 518Q1276 532 1264 548Q1244 575 1240 592Z" />
        <circle cx="1240" cy="520" r="19" fill="#fff" />
      </g>
      <g>
        <clipPath id="face"><circle cx="2623" cy="794" r="48" /></clipPath>
        <circle cx="2623" cy="794" r="50" fill="#000" stroke="#1414ff" stroke-width="5" />
        <g clip-path="url(#face)" fill="#fff">
          <circle cx="2623" cy="783" r="20" />
          <path d="M2590 842Q2590 805 2623 805Q2656 805 2656 842Z" />
        </g>
      </g>
      <g>
        <circle cx="60" cy="1524" r="33" fill="#fff" stroke="#8a7f78" stroke-width="3" />
        <path fill="#b0713f" d="M44 1540Q40 1504 62 1504A18 18 0 0 1 78 1522Q78 1540 60 1541Z" />
        <path fill="#fff" d="M63 1512L66 1519L73 1522L66 1525L63 1532L60 1525L53 1522L60 1519Z" />
        <text class="brand" x="102" y="1520">mapbox</text>
      </g>
    </svg>`;
  }
}

@customElement("specialty-bar")
export class SpecialtyBar extends LitElement {
  @property({ attribute: false }) items: string[] = [];

  static styles = css`
    :host { display: block; }
    .list { display: flex; gap: 13px; margin: 0; padding: 0 11px; list-style: none; overflow: hidden; }
    .chip {
      height: 44px; padding: 0 22px; border: 0; border-radius: 12px; background: #fff; color: #000;
      font: 600 17px "Open Sans", "Noto Sans", sans-serif; white-space: nowrap; cursor: pointer;
    }
  `;

  render() {
    return html`<ul class="list">${this.items.map((name) => html`<li><button class="chip" type="button">${name}</button></li>`)}</ul>`;
  }
}

@customElement("app-root")
export class AppRoot extends LitElement {
  static styles = css`
    :host {
      display: flex; align-items: center; box-sizing: border-box; min-height: 100vh; padding: 24px 86px;
      background: linear-gradient(135deg, #d9f2fb 0%, #dddffa 32%, #e8b5f6 100%);
      font-family: "Open Sans", "Noto Sans", sans-serif; color: #1a202c;
    }
    .card { flex: 1; min-width: 0; background: #fff; border-radius: 24px; overflow: hidden; box-shadow: 0 2px 3px rgba(60, 30, 90, 0.45); }
    .head { display: grid; gap: 11px; box-sizing: border-box; width: 100%; max-width: 828px; margin: 0 auto; padding: 25px 0 22px; }
    .intro { display: flex; justify-content: space-between; align-items: center; height: 56px; }
    .hello { display: grid; }
    .title { margin: 0; font-size: 22px; line-height: 34px; font-weight: 700; }
    .lead { margin: 0; font-size: 17px; line-height: 32px; color: #2d3748; }
    .btn {
      display: flex; align-items: center; justify-content: center; gap: 9px; height: 46px; padding: 0 19px; border: 0; border-radius: 6px;
      background: #0000ff; color: #fff; font: 600 17px "Open Sans", "Noto Sans", sans-serif; cursor: pointer;
    }
    .search { display: flex; align-items: center; gap: 13px; box-sizing: border-box; height: 46px; padding: 0 13px; border: 1px solid #e2e8f0; border-radius: 23px; box-shadow: 0 3px 5px rgba(0, 0, 0, 0.14); }
    .glass { flex: none; width: 17px; height: 17px; }
    .field { flex: 1; min-width: 0; border: 0; outline: 0; background: none; font: 400 17px "Open Sans", "Noto Sans", sans-serif; color: #1a202c; }
    .field::placeholder { color: #718096; opacity: 1; }
    .stage { position: relative; height: 44vh; overflow: hidden; }
    .chips { position: absolute; top: 13px; left: 0; right: 0; }
    .info { position: absolute; right: 11px; bottom: 23px; display: grid; place-items: center; width: 57px; height: 57px; padding: 0; border: 0; border-radius: 50%; background: #fff; cursor: pointer; }
    .credit { position: absolute; right: 0; bottom: 0; display: flex; gap: 5px; padding: 0 5px; background: rgba(255, 255, 255, 0.5); font: 14px/23px "Liberation Sans", Arial, sans-serif; }
    .credit a { color: #404040; text-decoration: none; }
    .credit .strong { font-weight: 700; }
    .pair { display: flex; gap: 3px; }
    .actions { display: grid; gap: 17px; width: 340px; margin: 0 auto; padding: 22px 0 17px; }
    .muted { background: #858585; }
    .locate { background: #0008ff; }
  `;

  render() {
    return html`<main class="card">
      <header class="head">
        <div class="intro">
          <div class="hello">
            <h1 class="title">Welcome To Heco</h1>
            <p class="lead">We are your healthcare facility recommender.</p>
          </div>
          <button class="btn" type="button">Login</button>
        </div>
        <label class="search">
          <svg class="glass" viewBox="0 0 17 17" fill="none" stroke="#d4d4d4" stroke-width="1.4" stroke-linecap="round" aria-hidden="true">
            <circle cx="6.5" cy="6" r="5" /><path d="M10 10L16 15.5" />
          </svg>
          <input class="field" type="search" placeholder="Search..." aria-label="Search" />
        </label>
      </header>
      <section class="stage">
        <street-map></street-map>
        <specialty-bar class="chips" .items=${SPECIALTIES}></specialty-bar>
        <div class="credit">
          <span class="pair"><a href="#mapbox">© Mapbox</a><a href="#osm">© OpenStreetMap</a></span>
          <a class="strong" href="#improve">Improve this map</a>
        </div>
        <button class="info" type="button" aria-label="Information">
          <svg width="30" height="30" viewBox="0 0 30 30" fill="none" stroke="#1010ff" stroke-width="2" aria-hidden="true">
            <circle cx="15" cy="15" r="13.5" /><path d="M15 12.5V22" /><circle cx="15" cy="9" r="1.2" fill="#1010ff" stroke="none" />
          </svg>
        </button>
      </section>
      <footer class="actions">
        <button class="btn muted" type="button">
          <svg width="18" height="18" viewBox="0 0 18 18" fill="none" stroke="#fff" stroke-width="1.3" aria-hidden="true">
            <circle cx="3.5" cy="3.5" r="2.2" /><path d="M6 3.5H17" /><circle cx="9" cy="9" r="2.2" /><path d="M1 9H6.500M11.500 9H17" /><circle cx="14.500" cy="15" r="2.200" /><path d="M1 15H12" />
          </svg>
          Configuration
        </button>
        <button class="btn locate" type="button">
          <svg width="12" height="16" viewBox="0 0 12 16" fill="#fff" fill-rule="evenodd" aria-hidden="true">
            <path d="M6 1A5 5 0 0 1 11 6C11 9 7 12 6 15.500C5 12 1 9 1 6A5 5 0 0 1 6 1ZM6 3.200A2.800 2.800 0 1 0 6 8.800A2.800 2.800 0 1 0 6 3.200Z" />
          </svg>
          Locate
        </button>
      </footer>
    </main>`;
  }
}
